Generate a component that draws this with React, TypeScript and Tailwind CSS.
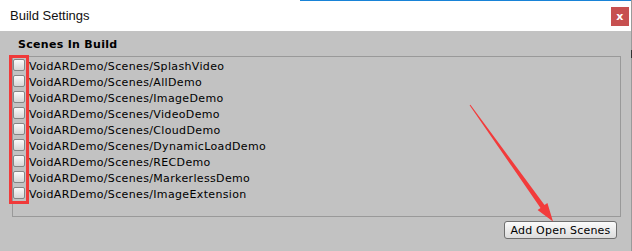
const scenes = [
  "VoidARDemo/Scenes/SplashVideo",
  "VoidARDemo/Scenes/AllDemo",
  "VoidARDemo/Scenes/ImageDemo",
  "VoidARDemo/Scenes/VideoDemo",
  "VoidARDemo/Scenes/CloudDemo",
  "VoidARDemo/Scenes/DynamicLoadDemo",
  "VoidARDemo/Scenes/RECDemo",
  "VoidARDemo/Scenes/MarkerlessDemo",
  "VoidARDemo/Scenes/ImageExtension",
];

function Toggle() {
  return (
    <span className="h-[12px] w-[12px] shrink-0 rounded-[2px] border border-[#858585] bg-gradient-to-b from-[#fafafa] to-[#d6d6d6]" />
  );
}

export default function App() {
  return (
    <div className="relative h-[251px] w-[632px] overflow-hidden bg-[#c2c2c2] font-['DejaVu_Sans',sans-serif] text-[11px] tracking-[0.35px] text-black">
      {/* title bar */}
      <div className="flex h-[31px] w-[631px] items-center justify-between border-t border-t-white bg-white pl-[10px] pr-[2px]">
        <span className="font-['Liberation_Sans',sans-serif] text-[13px] tracking-normal text-[#111]">
          Build Settings
        </span>
        <span className="flex h-[19px] w-[18px] items-center justify-center bg-[#c75050] text-[11px] font-bold leading-none text-white">
          x
        </span>
      </div>
      <div className="absolute left-[300px] top-0 h-[1px] w-[331px] bg-[#1883d7]" />

      {/* body */}
      <div className="flex w-[631px] flex-col">
        <div className="h-[21px] pl-[18px] pt-[6px] text-[11px] font-bold leading-[16px] tracking-[0.3px]">
          Scenes In Build
        </div>
        <div className="ml-[12px] mt-[4px] flex h-[161px] w-[609px] flex-col border border-[#999999] pt-[2px]">
          {scenes.map((s) => (
            <div key={s} className="flex h-[16px] items-start gap-[4px] leading-[16px]">
              <Toggle />
              <span>{s}</span>
            </div>
          ))}
        </div>
        <div className="flex w-[617px] justify-end pt-[4px]">
          <button className="flex h-[18px] w-[113px] items-center justify-center rounded-[3px] border border-[#6e6e6e] bg-gradient-to-b from-[#fbfbfb] to-[#dcdcdc] text-[11px] leading-none tracking-[0.2px]">
            Add Open Scenes
          </button>
        </div>
      </div>

      {/* right edge of window behind */}
      <div className="absolute right-0 top-0 h-[251px] w-[1px] bg-[#9a9a9a]" />
      <div className="absolute right-0 top-[50px] h-[8px] w-[1px] bg-[#333]" />

      {/* annotations */}
      <div className="pointer-events-none absolute left-[9px] top-[55px] h-[149px] w-[20px] border-[3px] border-[#f03a3a]" />
      <svg className="pointer-events-none absolute left-0 top-0" width="632" height="251">
        <polygon
          points="469.6,105.3 540.5,207.9 537.6,209.9 553,221.5 547.4,202.9 544.5,204.9 470.4,104.7"
          fill="#f23b3b"
        />
      </svg>
    </div>
  );
}
